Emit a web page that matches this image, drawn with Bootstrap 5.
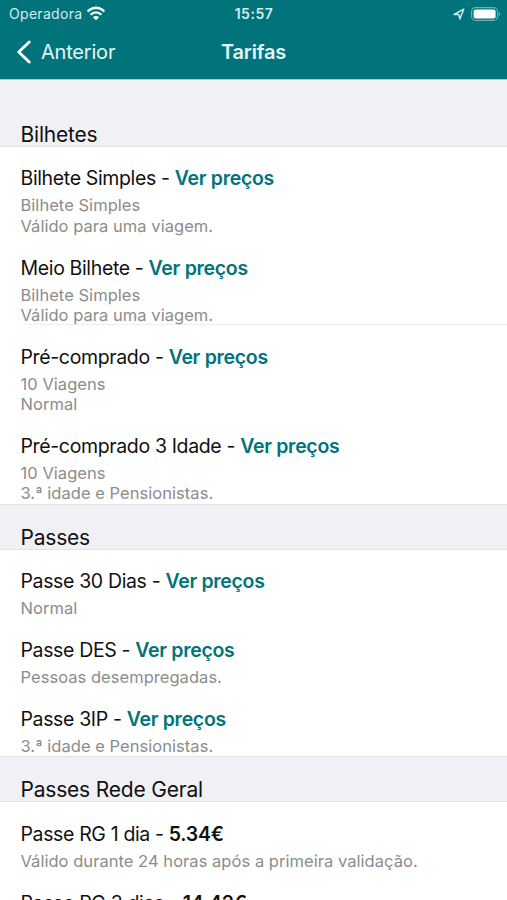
<!DOCTYPE html>
<html lang="pt">
<head>
<meta charset="utf-8">
<meta name="viewport" content="width=device-width, initial-scale=1">
<title>Tarifas</title>
<link href="https://cdn.jsdelivr.net/npm/bootstrap@5.3.0/dist/css/bootstrap.min.css" rel="stylesheet">
<style>
  :root { --teal: #00747a; }
  body { font-family: Inter, "Liberation Sans", sans-serif; color: #111; height: 900px; overflow: hidden; }
  .top-area { background: var(--teal); height: 79px; }
  .status-bar { height: 27px; font-size: 14px; padding: 0 5px 0 9px; color: #d3edef; }
  .status-bar > * { flex: 1 1 0; }
  .carrier { letter-spacing: .3px; }
  .clock { font-weight: 600; letter-spacing: .5px; margin-left: -3px; }
  .title-bar { height: 50px; padding: 0 16px; font-size: 20px; color: #e3f6f7; }
  .title-bar > * { flex: 1 1 0; }
  .back-link { color: inherit; letter-spacing: -.2px; }
  .page-title { font-size: 20px; font-weight: 600; letter-spacing: -.2px; }
  .section-head { background: #f0f0f5; height: 46px; padding: 0 20.5px; font-size: 21px; line-height: 22px; border-top: 1px solid #e2e2e6; border-bottom: 1px solid #e2e2e6; letter-spacing: -.2px; }
  .section-first { height: 68px; border-top-color: #9fd0d3; }
  .fare { height: 68.9px; padding: 19.4px 20.5px 0; }
  .fare-tall { height: 89.2px; }
  .fare-name { font-size: 19.5px; line-height: 24px; letter-spacing: -.36px; }
  .fare-name a { color: var(--teal); font-weight: 600; letter-spacing: -.3px; }
  .fare-name b { font-weight: 600; letter-spacing: -.22px; }
  .fare-note { font-size: 16.5px; line-height: 20.4px; color: #8c8c8c; margin-top: 5px; letter-spacing: .04px; }
  .rule { height: 1px; margin: -1px 0 0 26px; background: #ededed; }
</style>
</head>
<body class="bg-white">
<header class="top-area">
  <div class="status-bar d-flex align-items-center">
    <div class="d-flex align-items-center gap-1"><span class="carrier">Operadora</span>
      <svg width="20" height="15" viewBox="0 0 20 15" fill="none" stroke="#fff" stroke-width="2.3"><path d="M1.6 5.5Q10-2 18.4 5.5M4.6 8.7Q10 4 15.4 8.7"/><path d="M6.9 11.2Q10 8.6 13.1 11.2L10 14.3Z" fill="#fff" stroke="none"/></svg>
    </div>
    <div class="clock text-center">15:57</div>
    <div class="d-flex align-items-center justify-content-end">
      <svg width="12" height="12" viewBox="0 0 12 12" fill="none" stroke="#c9eaec" stroke-width="1.5" stroke-linejoin="round"><path d="M1 6.5L10.8 1.2L6.8 11L5.9 6.6Z"/></svg>
      <svg class="ms-1" width="33" height="14" viewBox="0 0 33 14"><rect x="2.6" y=".6" width="26" height="12.8" rx="4" fill="none" stroke="#6fb1b5" stroke-width="1.1"/><rect x="4.6" y="2.6" width="22" height="8.8" rx="2" fill="#fff"/><path d="M29.8 4.8Q32.6 7 29.8 9.2Z" fill="#6fb1b5"/></svg>
    </div>
  </div>
  <nav class="title-bar d-flex align-items-center">
    <a href="#" class="back-link d-flex align-items-center text-decoration-none">
      <svg class="me-2" width="17" height="24" viewBox="0 0 17 24" fill="none" stroke="#fff" stroke-width="2.9" stroke-linecap="round" stroke-linejoin="round"><path d="M13.2 2L2.8 12L13.2 22"/></svg>Anterior</a>
    <h1 class="page-title text-center m-0">Tarifas</h1>
    <span></span>
  </nav>
</header>
<main>
  <h2 class="section-head section-first d-flex align-items-end m-0 fw-normal"><span>Bilhetes</span></h2>
  <div class="fare fare-tall"><div class="fare-name">Bilhete Simples - <a href="#" class="text-decoration-none">Ver preços</a></div><div class="fare-note">Bilhete Simples<br>Válido para uma viagem.</div></div>
  <div class="fare fare-tall"><div class="fare-name">Meio Bilhete - <a href="#" class="text-decoration-none">Ver preços</a></div><div class="fare-note">Bilhete Simples<br>Válido para uma viagem.</div></div>
  <div class="rule"></div>
  <div class="fare fare-tall"><div class="fare-name">Pré-comprado - <a href="#" class="text-decoration-none">Ver preços</a></div><div class="fare-note">10 Viagens<br>Normal</div></div>
  <div class="fare fare-tall"><div class="fare-name">Pré-comprado 3 Idade - <a href="#" class="text-decoration-none">Ver preços</a></div><div class="fare-note">10 Viagens<br>3.ª idade e Pensionistas.</div></div>
  <h2 class="section-head d-flex align-items-end m-0 fw-normal"><span>Passes</span></h2>
  <div class="fare"><div class="fare-name">Passe 30 Dias - <a href="#" class="text-decoration-none">Ver preços</a></div><div class="fare-note">Normal</div></div>
  <div class="fare"><div class="fare-name">Passe DES - <a href="#" class="text-decoration-none">Ver preços</a></div><div class="fare-note">Pessoas desempregadas.</div></div>
  <div class="fare"><div class="fare-name">Passe 3IP - <a href="#" class="text-decoration-none">Ver preços</a></div><div class="fare-note">3.ª idade e Pensionistas.</div></div>
  <h2 class="section-head d-flex align-items-end m-0 fw-normal"><span>Passes Rede Geral</span></h2>
  <div class="fare"><div class="fare-name">Passe RG 1 dia - <b>5.34€</b></div><div class="fare-note">Válido durante 24 horas após a primeira validação.</div></div>
  <div class="fare"><div class="fare-name">Passe RG 3 dias - <b>14.42€</b></div></div>
</main>
<script src="https://cdn.jsdelivr.net/npm/bootstrap@5.3.0/dist/js/bootstrap.bundle.min.js"></script>
</body>
</html>
